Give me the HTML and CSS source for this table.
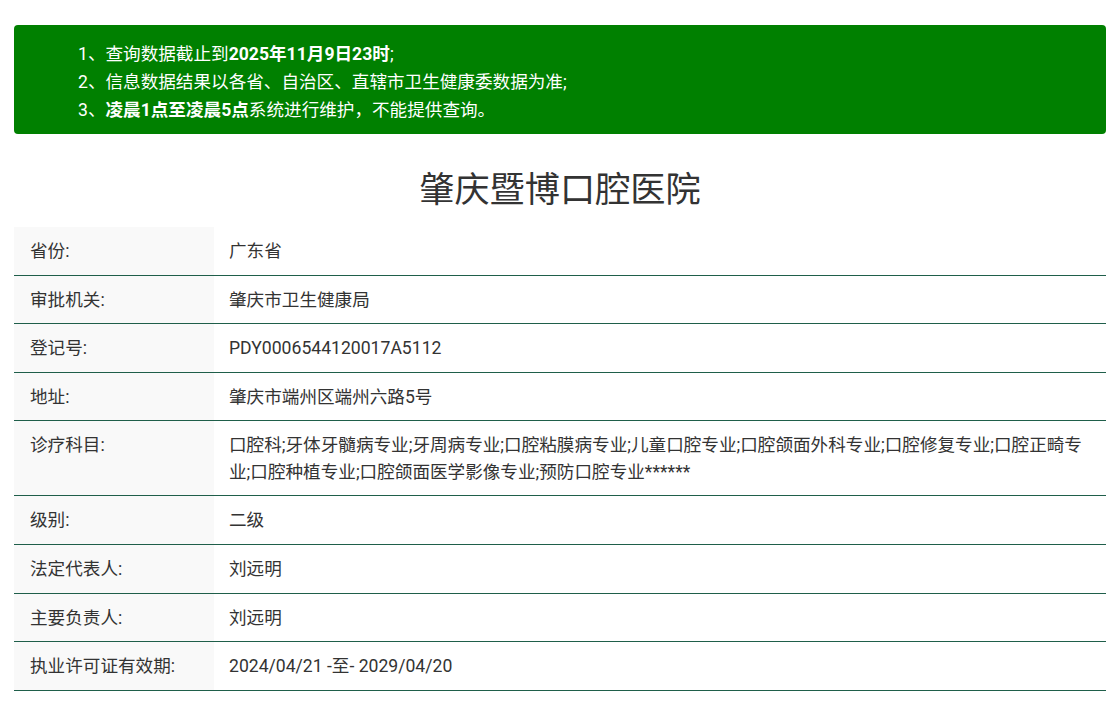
FILE: index.html
```html
<!DOCTYPE html>
<html lang="zh-CN">
<head>
<meta charset="utf-8">
<title>肇庆暨博口腔医院</title>
<link rel="stylesheet" href="styles.css">
</head>
<body>
<div class="page">
  <div class="notice">
    <p>1、查询数据截止到<b>2025年11月9日23时</b>;</p>
    <p>2、信息数据结果以各省、自治区、直辖市卫生健康委数据为准;</p>
    <p>3、<b>凌晨1点至凌晨5点</b>系统进行维护，不能提供查询。</p>
  </div>
  <h1 class="title">肇庆暨博口腔医院</h1>
  <table class="info">
    <tr><th>省份:</th><td>广东省</td></tr>
    <tr><th>审批机关:</th><td>肇庆市卫生健康局</td></tr>
    <tr><th>登记号:</th><td>PDY0006544120017A5112</td></tr>
    <tr><th>地址:</th><td>肇庆市端州区端州六路5号</td></tr>
    <tr><th>诊疗科目:</th><td>口腔科;牙体牙髓病专业;牙周病专业;口腔粘膜病专业;儿童口腔专业;口腔颌面外科专业;口腔修复专业;口腔正畸专业;口腔种植专业;口腔颌面医学影像专业;预防口腔专业******</td></tr>
    <tr><th>级别:</th><td>二级</td></tr>
    <tr><th>法定代表人:</th><td>刘远明</td></tr>
    <tr><th>主要负责人:</th><td>刘远明</td></tr>
    <tr><th>执业许可证有效期:</th><td>2024/04/21 -至- 2029/04/20</td></tr>
  </table>
</div>
</body>
</html>
```
FILE: styles.css
```css
html, body {
  margin: 0;
  padding: 0;
  background: #fff;
}
body {
  font-family: "Roboto", "Noto Sans CJK SC", sans-serif;
  font-size: 17.6px;
  color: #333;
}
.page {
  width: 1092px;
  padding: 25px 0 0 14px;
}
.notice {
  background: #008000;
  border-radius: 4px;
  color: #fff;
  padding: 15px 0 10px 64px;
}
.notice p {
  margin: 0;
  line-height: 28px;
}
.notice b {
  font-weight: 700;
}
.title {
  margin: 37px 0 17px;
  text-align: center;
  font-size: 35.2px;
  font-weight: 400;
  line-height: 39px;
  color: #333;
}
.info {
  width: 100%;
  border-collapse: collapse;
}
.info th, .info td {
  border-bottom: 1px solid #1f5f4a;
  padding: 11px 15px 10.2px;
  line-height: 26.4px;
  text-align: left;
  vertical-align: top;
  font-weight: 400;
}
.info th {
  width: 200px;
  box-sizing: border-box;
  padding-left: 16px;
  background: #f9f9f9;
}
```
